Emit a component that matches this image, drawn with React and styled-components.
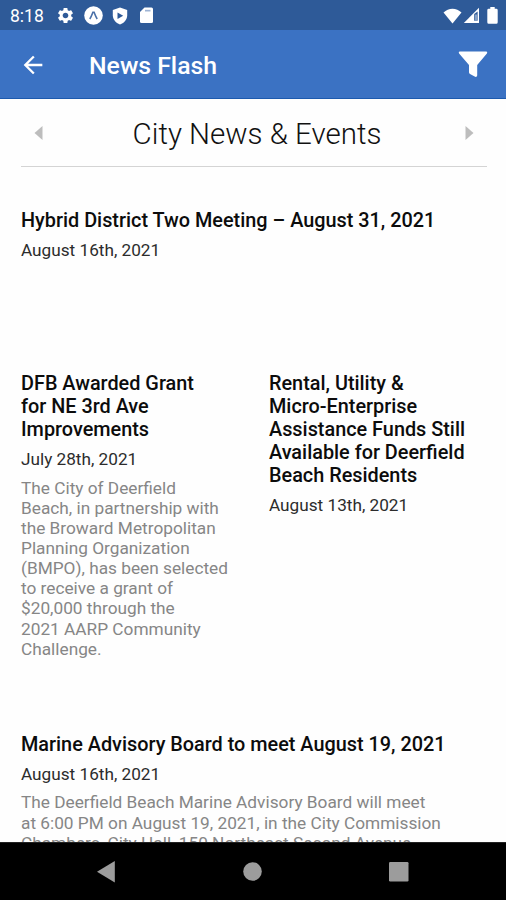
import React from 'react';
import styled, { createGlobalStyle } from 'styled-components';
import { MdSettings, MdArrowBack } from 'react-icons/md';

const GlobalStyle = createGlobalStyle`
  * {
    margin: 0;
    padding: 0;
    box-sizing: border-box;
  }

  body {
    background: #fff;
    font-family: Roboto, sans-serif;
  }
`;

const Screen = styled.div`
  display: flex;
  flex-direction: column;
  width: 506px;
  height: 900px;
  overflow: hidden;
  background: #fefefe;
`;

const StatusBar = styled.div`
  flex: none;
  display: flex;
  align-items: center;
  justify-content: space-between;
  height: 30px;
  padding: 1px 8px 0 10px;
  background: #2e5a98;
  color: #fff;
`;

const StatusGroup = styled.div`
  display: flex;
  align-items: center;
  gap: ${(props) => props.$gap};

  svg {
    display: block;
  }
`;

const Clock = styled.span`
  width: 37px;
  font-size: 17.5px;
  line-height: 28px;
`;

const AppBar = styled.header`
  flex: none;
  display: flex;
  align-items: center;
  height: 69px;
  padding: 0 18px 0 19px;
  background: #3b72c3;
  border-bottom: 1px solid #1c5aae;
  color: #fff;
`;

const IconButton = styled.button`
  display: flex;
  border: none;
  background: none;
  color: inherit;
`;

const BackButton = styled(IconButton)`
  padding-top: 1px;
`;

const ScreenTitle = styled.h1`
  flex: 1;
  margin: 3px 0 0 42px;
  font-size: 24.8px;
  font-weight: 500;
  line-height: 30px;
`;

const Content = styled.main`
  flex: 1;
  min-height: 0;
  overflow: hidden;
  padding: 0 19px 0 21px;
`;

const CategoryBar = styled.div`
  display: flex;
  align-items: center;
  justify-content: space-between;
  height: 68px;
  padding: 0 13px;
  border-bottom: 1px solid #d4d4d4;
`;

const CategoryName = styled.h2`
  margin: 3px 0 0 6px;
  font-size: 29.5px;
  font-weight: 300;
  line-height: 36px;
  color: #111;
`;

const Row = styled.section`
  display: grid;
  grid-template-columns: ${(props) => props.$columns || '1fr'};
  padding-top: ${(props) => props.$top};
`;

const Story = styled.article`
  white-space: pre;
`;

const Headline = styled.h3`
  font-size: 19.85px;
  font-weight: 500;
  line-height: 23px;
  color: #0c0c0c;
`;

const PostedOn = styled.p`
  margin-top: 8px;
  font-size: 17.2px;
  line-height: 20px;
  color: #2c2c2c;
`;

const Summary = styled.p`
  margin-top: 8.5px;
  font-size: 17.25px;
  line-height: 20.15px;
  color: #868686;
`;

const NavBar = styled.nav`
  flex: none;
  display: flex;
  align-items: center;
  justify-content: space-between;
  height: 58px;
  padding: 0 97px 0 96px;
  background: #000;
  border-top: 1px solid #222;

  svg {
    display: block;
    fill: #9c9c9c;
  }
`;

const ExpoIcon = () => (
  <svg width="19" height="19" viewBox="0 0 19 19">
    <circle cx="9.5" cy="9.5" r="9.3" fill="#fff" />
    <path
      d="M5.800 13C7.200 11 8 8.500 8.900 6.200h1.200C11 8.500 11.800 11 13.200 13"
      fill="none"
      stroke="#4a70a8"
      strokeWidth="1.6"
    />
  </svg>
);

const ShieldIcon = () => (
  <svg width="16" height="18" viewBox="0 0 16 18">
    <path
      d="M8 .5 15.2 3v5.2c0 4.2-2.8 7.6-7.2 9.3C3.600 15.800.8 12.400.8 8.200V3z"
      fill="#fff"
    />
    <path d="M5.500 5.500v6.500L11.200 8.800z" fill="#2e5a98" />
  </svg>
);

const SdCardIcon = () => (
  <svg width="19" height="17" viewBox="0 0 19 17">
    <path
      d="M7.500.5h7q1.500 0 1.500 1.500v12.500q0 1.500-1.500 1.500h-10Q3 16 3 14.500V5z"
      fill="#fff"
    />
    <path d="M8 2.800h5.500v1.700H8z" fill="#9fb4d4" />
  </svg>
);

const WifiIcon = () => (
  <svg width="19" height="16" viewBox="0 0 19 16">
    <path d="M.5 4.500C5.500-.6 13.500-.6 18.500 4.500L9.500 15.500z" fill="#fff" />
  </svg>
);

const SignalIcon = () => (
  <svg width="17" height="17" viewBox="0 0 17 17">
    <path d="M16 .8V16H.8z" fill="#fff" />
    <path d="M11.200 7v6.800h3.400V4.500z" fill="#2e5a98" />
    <path d="M13 7.500v6" stroke="#dfe8f5" strokeWidth="1" />
  </svg>
);

const BatteryIcon = () => (
  <svg width="11" height="17" viewBox="0 0 11 17">
    <path
      d="M3.300 0h4.400v1.800h1.600q1.400 0 1.400 1.400v12q0 1.500-1.400 1.500H1.700Q.3 16.700.3 15.200v-12q0-1.400 1.400-1.400h1.600z"
      fill="#fff"
    />
  </svg>
);

const Signals = styled(StatusGroup)`
  ${StatusGroup} {
    margin-right: 7px;
  }
`;

const FilterIcon = () => (
  <svg width="30" height="27" viewBox="0 0 30 27">
    <path
      d="M1.800.5h26.400q1.800.2.700 1.900L19.200 14v10.500q-.2 1.700-2 1.300l-5.200-2.700q-1-.6-1-1.800V14L1.100 2.400Q0 .7 1.800.5z"
      fill="#fff"
    />
  </svg>
);

const Caret = ({ d }) => (
  <svg width="9" height="14" viewBox="0 0 9 14">
    <path d={d} fill="#bdbdbd" />
  </svg>
);

const grantSummary = `The City of Deerfield
Beach, in partnership with
the Broward Metropolitan
Planning Organization
(BMPO), has been selected
to receive a grant of
$20,000 through the
2021 AARP Community
Challenge.`;

const marineSummary = `The Deerfield Beach Marine Advisory Board will meet
at 6:00 PM on August 19, 2021, in the City Commission
Chambers, City Hall, 150 Northeast Second Avenue,`;

function NewsItem({ title, date, summary }) {
  return (
    <Story>
      <Headline>{title}</Headline>
      <PostedOn>{date}</PostedOn>
      {summary && <Summary>{summary}</Summary>}
    </Story>
  );
}

export default function App() {
  return (
    <Screen>
      <GlobalStyle />

      <StatusBar>
        <StatusGroup $gap="9px">
          <Clock>8:18</Clock>
          <MdSettings size={19} />
          <ExpoIcon />
          <ShieldIcon />
          <SdCardIcon />
        </StatusGroup>
        <Signals $gap="0px">
          <StatusGroup $gap="1px">
            <WifiIcon />
            <SignalIcon />
          </StatusGroup>
          <BatteryIcon />
        </Signals>
      </StatusBar>

      <AppBar>
        <BackButton aria-label="Back">
          <MdArrowBack size={28} />
        </BackButton>
        <ScreenTitle>News Flash</ScreenTitle>
        <IconButton aria-label="Filter">
          <FilterIcon />
        </IconButton>
      </AppBar>

      <Content>
        <CategoryBar>
          <Caret d="M8.500 0v14L.5 7z" />
          <CategoryName>City News &amp; Events</CategoryName>
          <Caret d="M.5 0v14l8-7z" />
        </CategoryBar>

        <Row $top="42px">
          <NewsItem
            title="Hybrid District Two Meeting – August 31, 2021"
            date="August 16th, 2021"
          />
        </Row>

        <Row $top="112px" $columns="248px 1fr">
          <NewsItem
            title={'DFB Awarded Grant\nfor NE 3rd Ave\nImprovements'}
            date="July 28th, 2021"
            summary={grantSummary}
          />
          <NewsItem
            title={
              'Rental, Utility &\nMicro-Enterprise\nAssistance Funds Still\nAvailable for Deerfield\nBeach Residents'
            }
            date="August 13th, 2021"
          />
        </Row>

        <Row $top="74px">
          <NewsItem
            title="Marine Advisory Board to meet August 19, 2021"
            date="August 16th, 2021"
            summary={marineSummary}
          />
        </Row>
      </Content>

      <NavBar>
        <svg width="19" height="22" viewBox="0 0 19 22">
          <path d="M18.800 0v21.500L1 10.800z" />
        </svg>
        <svg width="20" height="19" viewBox="0 0 20 19">
          <circle cx="10.500" cy="9.500" r="9.300" />
        </svg>
        <svg width="20" height="20" viewBox="0 0 20 20">
          <rect width="19.500" height="19.500" rx="1.200" />
        </svg>
      </NavBar>
    </Screen>
  );
}
